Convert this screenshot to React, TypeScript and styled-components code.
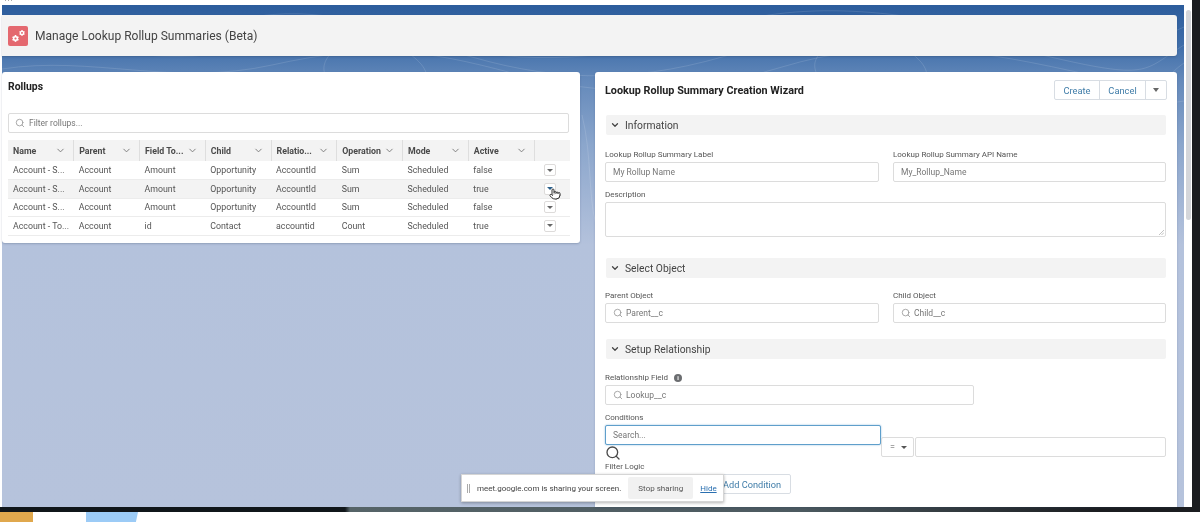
import styled, { createGlobalStyle } from "styled-components";
import { ChevronDown, Pointer, Search } from "lucide-react";
import { FaCog } from "react-icons/fa";

const GlobalStyle = createGlobalStyle`
  html, body {
    margin: 0;
    padding: 0;
    background: #fff;
    overflow: hidden;
  }
  * {
    box-sizing: border-box;
  }
`;

const Screen = styled.div`
  position: relative;
  width: 1200px;
  height: 522px;
  overflow: hidden;
  display: flex;
  flex-direction: column;
  background: #fff;
  font-family: Roboto, "Liberation Sans", Arial, sans-serif;
  color: #3e3e3c;
  filter: blur(0.35px);
`;

const TopStrip = styled.div`
  height: 5px;
  display: flex;
  gap: 2px;
  padding-left: 5px;
  background: linear-gradient(90deg, #fff 1192px, #1b1d20 1192px);
`;

const TopDot = styled.span`
  width: 1px;
  height: 1px;
  background: #aaa;
`;

const Middle = styled.div`
  display: flex;
  height: 502px;
  background: #1b1d20;
`;

const Sheet = styled.div`
  width: 1192px;
  display: flex;
  background: #fff;
  padding-left: 2px;
`;

const Page = styled.div`
  position: relative;
  width: 1182px;
  padding-top: 10px;
  background: linear-gradient(
    180deg,
    #2c5c9c 0,
    #3f6ea9 40px,
    #6489ba 75px,
    #8ba6cc 140px,
    #b4c2dc 240px,
    #b6c3dc 100%
  );
`;

const Contours = styled.svg`
  position: absolute;
  left: 0;
  top: 0;
  width: 1182px;
  height: 220px;
`;

const ScrollTrack = styled.div`
  width: 8px;
  padding: 5px 1px 0 2px;
  background: #fff;
`;

const ScrollThumb = styled.div`
  height: 210px;
  border-radius: 3px;
  background: #d4d6da;
`;

const HeaderCard = styled.header`
  position: relative;
  width: 1175px;
  height: 41px;
  display: flex;
  align-items: center;
  gap: 7px;
  padding-left: 6px;
  background: #f3f3f3;
  border-radius: 0 3px 3px 0;
  box-shadow: 0 1px 2px rgba(40, 60, 90, 0.3);
`;

const AppIcon = styled.div`
  width: 20px;
  height: 20px;
  display: flex;
  justify-content: center;
  background: #e4686f;
  border-radius: 2px;
  color: #fff;
  padding: 4px 2px;
`;

const Gear = styled(FaCog)<{ $top?: boolean }>`
  align-self: ${(p) => (p.$top ? "flex-start" : "flex-end")};
  width: ${(p) => (p.$top ? 6 : 7)}px;
  height: ${(p) => (p.$top ? 6 : 7)}px;
`;

const PageTitle = styled.h1`
  margin: 0;
  font-size: 12.05px;
  font-weight: 400;
  color: #444;
`;

const Panels = styled.div`
  position: relative;
  display: flex;
  align-items: flex-start;
  gap: 15px;
  margin-top: 16px;
`;

const Card = styled.section<{ $w: number }>`
  width: ${(p) => p.$w}px;
  background: #fff;
  border-radius: 3px;
  box-shadow: 0 1px 2px rgba(40, 60, 90, 0.25);
`;

const LeftCard = styled(Card)`
  height: 171px;
  padding: 0 10px 0 6px;
`;

const RightCard = styled(Card)`
  height: 435px;
  border-radius: 3px 3px 0 0;
  padding: 8px 10px 0 10px;
  overflow: hidden;
`;

const CardTitle = styled.h2`
  margin: 0;
  height: 28px;
  font-size: 10.4px;
  line-height: 29px;
  font-weight: 700;
  color: #222;
`;

const InputBox = styled.div<{ $w?: number; $h?: number; $focus?: boolean }>`
  width: ${(p) => (p.$w ? `${p.$w}px` : "100%")};
  height: ${(p) => p.$h ?? 20}px;
  display: flex;
  align-items: center;
  gap: 3px;
  padding: 0 7px;
  background: #fff;
  border: 1px solid ${(p) => (p.$focus ? "#5f9fcb" : "#dcdcdc")};
  border-radius: 2px;
  font-size: 8.5px;
  color: #777;
  box-shadow: ${(p) => (p.$focus ? "0 0 2px #8dbbdc" : "none")};
`;

const FilterBox = styled(InputBox)`
  margin: 13px 0 7px 0;
  width: 561px;
  padding: 0 6px;
  gap: 4px;
`;

const SearchGlyph = styled(Search)`
  width: 10px;
  height: 10px;
  color: #999;
  flex: none;
`;

const Table = styled.table`
  width: 562px;
  table-layout: fixed;
  border-collapse: collapse;
  font-size: 8.8px;
`;

const HeadCell = styled.th`
  width: 65.75px;
  height: 21px;
  padding: 0 7px 0 5px;
  background: #f3f3f3;
  border-right: 1px solid #dedede;
  text-align: left;
  font-size: 8.8px;
  font-weight: 700;
  color: #4a4a4a;
`;

const ActionHead = styled.th`
  height: 21px;
  background: #f3f3f3;
`;

const HeadInner = styled.div`
  display: flex;
  align-items: center;
  justify-content: space-between;
  white-space: nowrap;
`;

const HeadChevron = styled(ChevronDown)`
  width: 11px;
  height: 11px;
  color: #777;
  flex: none;
`;

const Row = styled.tr<{ $hover?: boolean }>`
  height: 18.5px;
  background: ${(p) => (p.$hover ? "#f3f3f3" : "#fff")};
  border-bottom: 1px solid #ececec;
`;

const Cell = styled.td`
  padding: 0 5px;
  color: #555;
  white-space: nowrap;
  overflow: hidden;
`;

const ActionCell = styled.td`
  position: relative;
  padding: 0 0 0 10px;
`;

const RowMenu = styled.div<{ $hover?: boolean }>`
  width: 12px;
  height: 12px;
  display: flex;
  align-items: center;
  justify-content: center;
  background: #fff;
  border: 1px solid #dddbda;
  border-radius: 2px;
  color: ${(p) => (p.$hover ? "#2a5f8a" : "#666")};
`;

const Caret = styled.span<{ $size?: number }>`
  width: 0;
  height: 0;
  border-left: ${(p) => p.$size ?? 3}px solid transparent;
  border-right: ${(p) => p.$size ?? 3}px solid transparent;
  border-top: ${(p) => (p.$size ?? 3) + 0.5}px solid currentColor;
`;

const HandCursor = styled(Pointer)`
  position: absolute;
  left: 15px;
  top: 8px;
  width: 12px;
  height: 12px;
  color: #333;
  fill: #fff;
`;

const WizardHead = styled.div`
  display: flex;
  align-items: center;
  justify-content: space-between;
`;

const WizardTitle = styled.h2`
  margin: 0;
  font-size: 10.8px;
  font-weight: 700;
  color: #222;
`;

const ButtonGroup = styled.div`
  display: flex;
  height: 20px;
  border: 1px solid #d8dde3;
  border-radius: 2px;
`;

const GroupButton = styled.div<{ $w: number }>`
  width: ${(p) => p.$w}px;
  display: flex;
  align-items: center;
  justify-content: center;
  font-size: 9.3px;
  color: #3f7ca8;
  border-left: 1px solid #d8dde3;
  &:first-child {
    border-left: 0;
  }
`;

const MenuButton = styled(GroupButton)`
  color: #666;
`;

const SectionBar = styled.div<{ $mt: number }>`
  height: 20px;
  margin-top: ${(p) => p.$mt}px;
  margin-left: 1px;
  margin-right: 1px;
  display: flex;
  align-items: center;
  gap: 5px;
  padding-left: 4px;
  background: #f3f3f3;
  border-radius: 2px;
  font-size: 10.3px;
  color: #444;
`;

const SectionChevron = styled(ChevronDown)`
  width: 10px;
  height: 10px;
  stroke-width: 3;
  color: #444;
`;

const TwoCols = styled.div<{ $mt: number }>`
  display: grid;
  grid-template-columns: 274px 273px;
  column-gap: 14px;
  margin-top: ${(p) => p.$mt}px;
`;

const Field = styled.div<{ $mt?: number }>`
  margin-top: ${(p) => p.$mt ?? 0}px;
`;

const Label = styled.div`
  height: 13px;
  margin-bottom: 1px;
  display: flex;
  align-items: center;
  gap: 6px;
  font-size: 8px;
  color: #555;
`;

const InfoDot = styled.span`
  width: 8px;
  height: 8px;
  display: flex;
  align-items: center;
  justify-content: center;
  border-radius: 50%;
  background: #6b6d70;
  color: #fff;
  font-size: 6px;
  font-weight: 700;
`;

const TextArea = styled.div`
  position: relative;
  width: 561px;
  height: 35px;
  border: 1px solid #dcdcdc;
  border-radius: 2px;
`;

const Grip = styled.svg`
  position: absolute;
  right: 1px;
  bottom: 1px;
  width: 5px;
  height: 5px;
`;

const ConditionRow = styled.div`
  display: flex;
  align-items: flex-start;
`;

const ConditionSearch = styled.div`
  width: 276px;
`;

const BigSearch = styled(Search)`
  display: block;
  width: 16px;
  height: 16px;
  margin-top: 0;
  color: #4a4a4a;
  stroke-width: 2;
`;

const OperatorSelect = styled.div`
  width: 33px;
  height: 20px;
  margin: 12px 1px 0 0;
  display: flex;
  align-items: center;
  justify-content: space-between;
  padding: 0 6px 0 8px;
  border: 1px solid #dcdcdc;
  border-radius: 2px;
  font-size: 9px;
  color: #555;
`;

const ValueBox = styled(InputBox)`
  margin-top: 12px;
  width: 251px;
`;

const FilterLabel = styled(Label)`
  margin-top: -1px;
`;

const AddButton = styled.div`
  width: 91px;
  height: 20px;
  margin-left: 95px;
  display: flex;
  align-items: center;
  justify-content: flex-end;
  padding-right: 9px;
  border: 1px solid #d8dde3;
  border-radius: 2px;
  font-size: 9.2px;
  color: #3f7ca8;
`;

const ShareToast = styled.div`
  position: absolute;
  left: 461px;
  top: 474px;
  width: 263px;
  height: 28px;
  display: flex;
  align-items: center;
  padding-left: 5px;
  background: #fff;
  border: 1px solid #d5d5d5;
  box-shadow: 0 1px 3px rgba(0, 0, 0, 0.3);
  font-size: 8px;
  color: #444;
  white-space: nowrap;
`;

const DragHandle = styled.span`
  width: 3px;
  height: 9px;
  margin-right: 7px;
  border-left: 1px solid #aaa;
  border-right: 1px solid #aaa;
`;

const StopButton = styled.div`
  width: 65px;
  height: 22px;
  margin: 0 7px;
  display: flex;
  align-items: center;
  justify-content: center;
  background: #f1f1f1;
  border-radius: 2px;
  color: #555;
`;

const HideLink = styled.span`
  color: #2a6fb0;
  text-decoration: underline;
`;

const DarkLine = styled.div`
  height: 5px;
  background: linear-gradient(90deg, #10161a 0, #10161a 345px, #566468 350px, #4c5a60 800px, #1b1d20 1100px);
`;

const Dock = styled.div`
  height: 10px;
  display: flex;
  gap: 53px;
  background: #fff;
`;

const DockOrange = styled.div`
  width: 33px;
  background: #e0a84d;
`;

const DockBlue = styled.div`
  width: 52px;
  background: #9ccbf6;
  clip-path: polygon(0 0, 100% 0, 96% 100%, 0 100%);
`;

const columns = ["Name", "Parent", "Field To...", "Child", "Relatio...", "Operation", "Mode", "Active"];

const rows = [
  ["Account - S...", "Account", "Amount", "Opportunity", "AccountId", "Sum", "Scheduled", "false"],
  ["Account - S...", "Account", "Amount", "Opportunity", "AccountId", "Sum", "Scheduled", "true"],
  ["Account - S...", "Account", "Amount", "Opportunity", "AccountId", "Sum", "Scheduled", "false"],
  ["Account - To...", "Account", "id", "Contact", "accountid", "Count", "Scheduled", "true"],
];

const contourPaths = [
  "M0 30 C60 10 120 50 200 24 S340 8 420 34 S600 60 700 26 S900 6 1000 30 S1120 50 1182 22",
  "M0 48 C80 30 150 66 240 44 S380 26 470 52 S640 78 740 46 S930 24 1040 50 S1140 66 1182 40",
  "M0 64 C90 50 170 82 270 60 S420 44 510 68 S680 92 780 62 S960 42 1070 66 S1150 80 1182 58",
  "M330 80 C300 50 360 20 400 44 S430 90 380 94 S340 92 330 80",
  "M820 76 C790 44 860 18 900 42 S930 88 880 92 S830 90 820 76",
  "M1000 120 C1040 90 1100 110 1182 96",
  "M580 110 C590 150 586 190 594 220",
];

export default function App() {
  return (
    <Screen>
      <GlobalStyle />
      <TopStrip>
        <TopDot />
        <TopDot />
        <TopDot />
      </TopStrip>
      <Middle>
        <Sheet>
          <Page>
            <Contours viewBox="0 0 1182 220" fill="none" stroke="#fff" strokeOpacity="0.12">
              {contourPaths.map((d) => (
                <path key={d} d={d} />
              ))}
            </Contours>
            <HeaderCard>
              <AppIcon>
                <Gear />
                <Gear $top />
              </AppIcon>
              <PageTitle>Manage Lookup Rollup Summaries (Beta)</PageTitle>
            </HeaderCard>
            <Panels>
              <LeftCard $w={578}>
                <CardTitle>Rollups</CardTitle>
                <FilterBox>
                  <SearchGlyph />
                  Filter rollups...
                </FilterBox>
                <Table>
                  <thead>
                    <tr>
                      {columns.map((c) => (
                        <HeadCell key={c}>
                          <HeadInner>
                            {c}
                            <HeadChevron />
                          </HeadInner>
                        </HeadCell>
                      ))}
                      <ActionHead />
                    </tr>
                  </thead>
                  <tbody>
                    {rows.map((r, i) => (
                      <Row key={i} $hover={i === 1}>
                        {r.map((v, j) => (
                          <Cell key={j}>{v}</Cell>
                        ))}
                        <ActionCell>
                          <RowMenu $hover={i === 1}>
                            <Caret />
                          </RowMenu>
                          {i === 1 && <HandCursor />}
                        </ActionCell>
                      </Row>
                    ))}
                  </tbody>
                </Table>
              </LeftCard>
              <RightCard $w={582}>
                <WizardHead>
                  <WizardTitle>Lookup Rollup Summary Creation Wizard</WizardTitle>
                  <ButtonGroup>
                    <GroupButton $w={44}>Create</GroupButton>
                    <GroupButton $w={46}>Cancel</GroupButton>
                    <MenuButton $w={21}>
                      <Caret $size={3.5} />
                    </MenuButton>
                  </ButtonGroup>
                </WizardHead>

                <SectionBar $mt={15}>
                  <SectionChevron />
                  Information
                </SectionBar>
                <TwoCols $mt={13}>
                  <div>
                    <Label>Lookup Rollup Summary Label</Label>
                    <InputBox>My Rollup Name</InputBox>
                  </div>
                  <div>
                    <Label>Lookup Rollup Summary API Name</Label>
                    <InputBox>My_Rollup_Name</InputBox>
                  </div>
                </TwoCols>
                <Field $mt={6}>
                  <Label>Description</Label>
                  <TextArea>
                    <Grip viewBox="0 0 5 5" stroke="#999" strokeWidth="0.6">
                      <path d="M0 5 L5 0 M2.5 5 L5 2.5" />
                    </Grip>
                  </TextArea>
                </Field>

                <SectionBar $mt={21}>
                  <SectionChevron />
                  Select Object
                </SectionBar>
                <TwoCols $mt={11}>
                  <div>
                    <Label>Parent Object</Label>
                    <InputBox>
                      <SearchGlyph />
                      Parent__c
                    </InputBox>
                  </div>
                  <div>
                    <Label>Child Object</Label>
                    <InputBox>
                      <SearchGlyph />
                      Child__c
                    </InputBox>
                  </div>
                </TwoCols>

                <SectionBar $mt={16}>
                  <SectionChevron />
                  Setup Relationship
                </SectionBar>
                <Field $mt={12}>
                  <Label>
                    Relationship Field
                    <InfoDot>i</InfoDot>
                  </Label>
                  <InputBox $w={369}>
                    <SearchGlyph />
                    Lookup__c
                  </InputBox>
                </Field>
                <Field $mt={6}>
                  <Label>Conditions</Label>
                  <ConditionRow>
                    <ConditionSearch>
                      <InputBox $focus>Search...</InputBox>
                      <BigSearch />
                    </ConditionSearch>
                    <OperatorSelect>
                      =
                      <Caret />
                    </OperatorSelect>
                    <ValueBox />
                  </ConditionRow>
                </Field>
                <FilterLabel>Filter Logic</FilterLabel>
                <AddButton>Add Condition</AddButton>
              </RightCard>
            </Panels>
          </Page>
          <ScrollTrack>
            <ScrollThumb />
          </ScrollTrack>
        </Sheet>
      </Middle>
      <DarkLine />
      <Dock>
        <DockOrange />
        <DockBlue />
      </Dock>
      <ShareToast>
        <DragHandle />
        meet.google.com is sharing your screen.
        <StopButton>Stop sharing</StopButton>
        <HideLink>Hide</HideLink>
      </ShareToast>
    </Screen>
  );
}
